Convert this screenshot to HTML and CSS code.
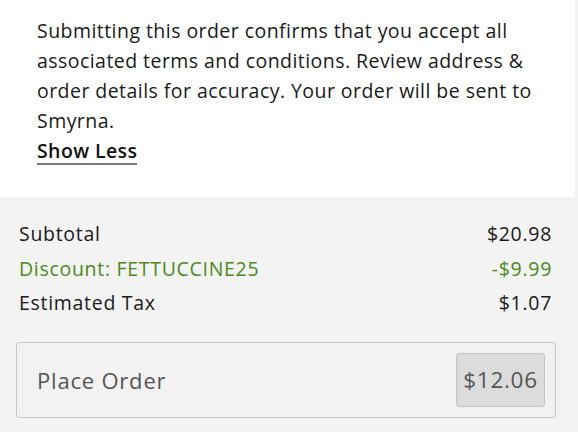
FILE: index.html
```html
<!DOCTYPE html>
<html>
<head>
<meta charset="utf-8">
<link rel="stylesheet" href="styles.css">
</head>
<body>
<div class="page">
  <section class="notice">
    <p class="notice-text">Submitting this order confirms that you accept all associated terms and conditions. Review address &amp; order details for accuracy. Your order will be sent to Smyrna.</p>
    <a class="toggle">Show Less</a>
  </section>
  <section class="summary">
    <div class="row"><span>Subtotal</span><span>$20.98</span></div>
    <div class="row discount"><span>Discount: FETTUCCINE25</span><span>-$9.99</span></div>
    <div class="row"><span>Estimated Tax</span><span>$1.07</span></div>
    <button class="place">
      <span class="place-label">Place Order</span>
      <span class="place-price">$12.06</span>
    </button>
  </section>
</div>
</body>
</html>
```
FILE: styles.css
```css
html, body {
  margin: 0;
  padding: 0;
  background: #f3f3f3;
}
body {
  font-family: "Open Sans", "Lato", sans-serif;
  color: #1a1a1a;
  width: 578px;
  height: 432px;
  overflow: hidden;
}
.notice {
  background: #ffffff;
  width: 575px;
  height: 197px;
  box-sizing: border-box;
  padding: 16px 30px 0 37px;
}
.notice-text {
  margin: 0;
  font-size: 19.5px;
  letter-spacing: 0.45px;
  line-height: 30px;
}
.toggle {
  display: inline-block;
  margin-top: 3px;
  font-size: 19.5px;
  letter-spacing: 0.4px;
  font-weight: 600;
  line-height: 24px;
  color: #111;
  border-bottom: 2px solid #7a7a7a;
}
.summary {
  padding: 20px 26px 0 19px;
  width: 578px;
  box-sizing: border-box;
}
.row {
  display: flex;
  justify-content: space-between;
  font-size: 19.5px;
  letter-spacing: 0.7px;
  line-height: 34.5px;
  color: #1a1a1a;
}
.row.discount {
  color: #4c8a1a;
}
.place {
  margin: 21px 0 0 -3px;
  width: 540px;
  height: 76px;
  box-sizing: border-box;
  display: flex;
  align-items: center;
  justify-content: space-between;
  padding: 0 10px 0 20px;
  background: #f2f2f2;
  border: 1px solid #c6c6c6;
  border-radius: 3px;
  font-family: inherit;
  cursor: pointer;
}
.place-label {
  font-size: 22px;
  letter-spacing: 0.8px;
  font-weight: 500;
  color: #555;
}
.place-price {
  width: 89px;
  height: 54px;
  box-sizing: border-box;
  display: flex;
  align-items: center;
  justify-content: center;
  background: #dcdcdc;
  border: 1px solid #c4c4c4;
  border-radius: 3px;
  font-size: 22.5px;
  letter-spacing: 0.7px;
  font-weight: 500;
  color: #555;
}
```
